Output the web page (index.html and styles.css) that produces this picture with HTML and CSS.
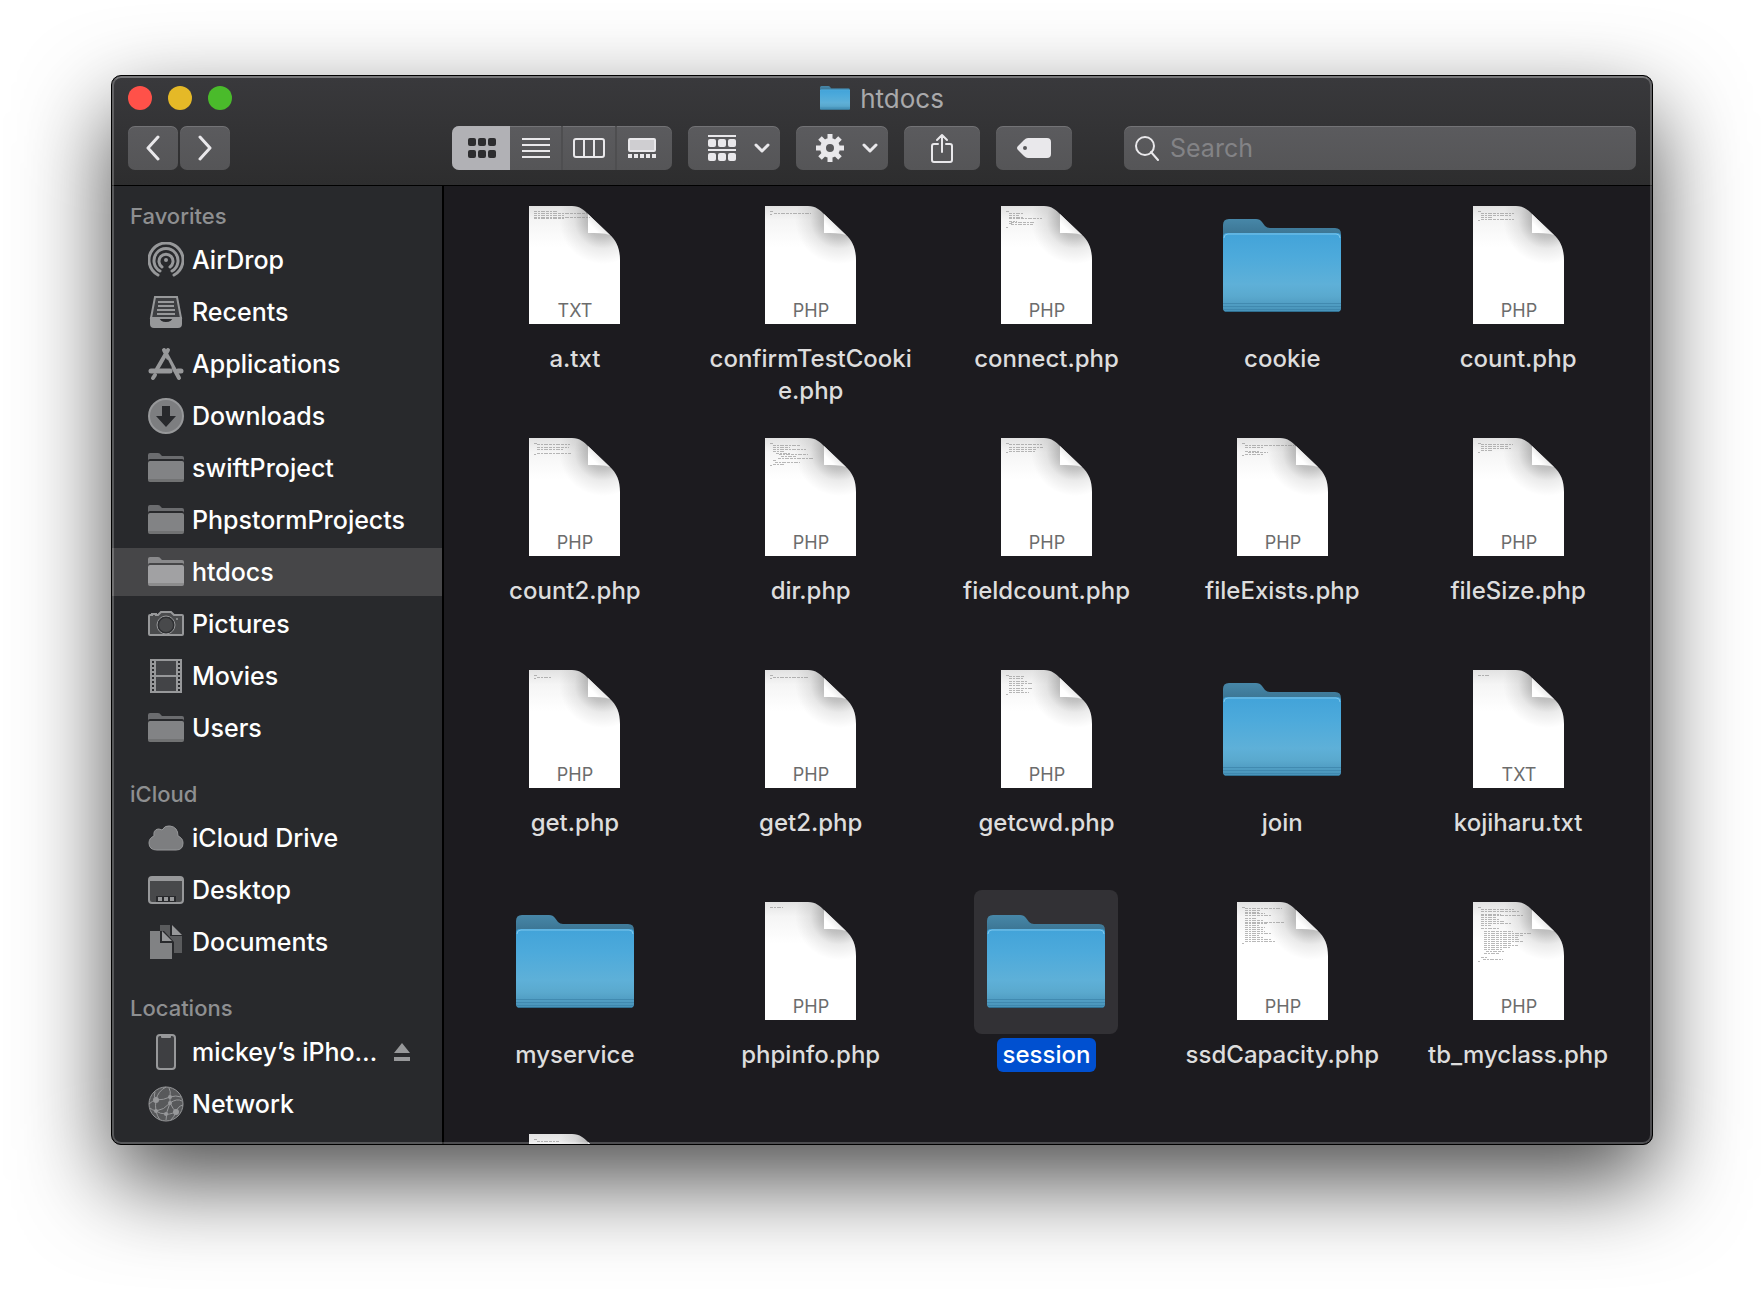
FILE: index.html
```html
<!DOCTYPE html>
<html lang="en">
<head>
    <meta charset="utf-8">
    <title>htdocs</title>
    <link rel="stylesheet" href="styles.css">
</head>
<body>

<!-- shared icons -->
<svg class="defs" width="0" height="0" aria-hidden="true">
    <defs>
        <linearGradient id="folderFront" x1="0" y1="0" x2="0" y2="1">
            <stop offset="0" stop-color="#42a3d9"/>
            <stop offset=".3" stop-color="#4daadb"/>
            <stop offset=".65" stop-color="#5eb0d8"/>
            <stop offset=".8" stop-color="#5aa9ce"/>
            <stop offset="1" stop-color="#4792b8"/>
        </linearGradient>
        <linearGradient id="folderBack" x1="0" y1="0" x2="0" y2="1">
            <stop offset="0" stop-color="#4787a8"/>
            <stop offset="1" stop-color="#356b88"/>
        </linearGradient>
        <linearGradient id="paperTop" x1="0" y1="0" x2="0" y2="1">
            <stop offset="0" stop-color="#e2e2e2"/>
            <stop offset=".12" stop-color="#f5f5f5"/>
            <stop offset=".35" stop-color="#fff"/>
        </linearGradient>
        <radialGradient id="foldShade" gradientUnits="userSpaceOnUse" cx="74" cy="14" r="44">
            <stop offset="0" stop-color="#000" stop-opacity=".36"/>
            <stop offset=".4" stop-color="#000" stop-opacity=".22"/>
            <stop offset=".65" stop-color="#000" stop-opacity=".08"/>
            <stop offset="1" stop-color="#000" stop-opacity="0"/>
        </radialGradient>
        <linearGradient id="fold" gradientUnits="userSpaceOnUse" x1="59" y1="28" x2="70" y2="17">
            <stop offset="0" stop-color="#fff"/>
            <stop offset=".5" stop-color="#fff"/>
            <stop offset="1" stop-color="#e8e8e8"/>
        </linearGradient>

        <symbol id="paper" viewBox="0 0 91 118">
            <path fill="url(#paperTop)" d="M0 0H43C51 0 55 4 60 9L80 28C88 35 91 43 91 54V118H0Z"/>
            <path fill="url(#foldShade)" d="M0 0H43C51 0 55 4 60 9L80 28C88 35 91 43 91 54V118H0Z"/>
            <path fill="url(#fold)" d="M59 8L81 29C75 27 67 27 59 27Z"/>
        </symbol>

        <symbol id="folder" viewBox="0 0 118 94">
            <path fill="url(#folderBack)" d="M0 24V6Q0 0 6 0H33Q37 0 39 3L42 7Q44 9 47 9H112Q118 9 118 15V24Z"/>
            <rect x="0" y="14" width="118" height="79" rx="4" fill="url(#folderFront)"/>
            <path fill="none" stroke="#7cc6ec" d="M1 19Q1 15 5 15H113Q117 15 117 19"/>
            <path fill="none" stroke="#3a82a8" stroke-opacity=".7" d="M0 84.500H118M0 87.500H118M0 90.500H118"/>
            <path fill="none" stroke="#2f6f90" d="M2 92.500H116"/>
        </symbol>

        <symbol id="sideFolder" viewBox="0 0 36 36">
            <path fill="currentColor" opacity=".75" d="M0 11V5Q0 3 2 3H10Q12 3 13 5L14 6H34Q36 6 36 8V11Q36 9 34 9H2Q0 9 0 11Z"/>
            <path fill="currentColor" d="M0 13Q0 11 2 11H34Q36 11 36 13V30Q36 32 34 32H2Q0 32 0 30Z"/>
            <path fill="#000" opacity=".13" d="M0 29H36V30Q36 32 34 32H2Q0 32 0 30Z"/>
        </symbol>

        <symbol id="chevron" viewBox="0 0 16 10">
            <path fill="none" stroke="currentColor" stroke-width="3" stroke-linecap="round" stroke-linejoin="round" d="M2 2L8 8L14 2"/>
        </symbol>
    </defs>
</svg>

<main class="window">
    <header class="toolbar">
        <div class="titlebar">
            <div class="lights">
                <button class="light close" aria-label="Close"></button>
                <button class="light minimize" aria-label="Minimize"></button>
                <button class="light zoom" aria-label="Zoom"></button>
            </div>
            <h1 class="title">
                <svg width="30" height="24"><use href="#folder"/></svg>
                htdocs
            </h1>
        </div>

        <div class="controls">
            <nav class="history">
                <button class="btn" aria-label="Back">
                    <svg width="16" height="26" viewBox="0 0 16 26"><path class="line" stroke-width="3" d="M13 2L3 13L13 24"/></svg>
                </button>
                <button class="btn" aria-label="Forward">
                    <svg width="16" height="26" viewBox="0 0 16 26"><path class="line" stroke-width="3" d="M3 2L13 13L3 24"/></svg>
                </button>
            </nav>

            <div class="views">
                <button class="view on" aria-label="Icons">
                    <svg width="28" height="20" viewBox="0 0 28 20" fill="currentColor">
                        <rect width="8" height="8" rx="2"/><rect x="10" width="8" height="8" rx="2"/><rect x="20" width="8" height="8" rx="2"/>
                        <rect y="12" width="8" height="8" rx="2"/><rect x="10" y="12" width="8" height="8" rx="2"/><rect x="20" y="12" width="8" height="8" rx="2"/>
                    </svg>
                </button>
                <button class="view" aria-label="List">
                    <svg width="28" height="20" viewBox="0 0 28 20"><path stroke="currentColor" stroke-width="2" d="M0 1H28M0 7H28M0 13H28M0 19H28"/></svg>
                </button>
                <button class="view" aria-label="Columns">
                    <svg width="32" height="20" viewBox="0 0 32 20"><path stroke="currentColor" stroke-width="2" fill="none" d="M3 1H29Q31 1 31 3V17Q31 19 29 19H3Q1 19 1 17V3Q1 1 3 1ZM11 1V19M21 1V19"/></svg>
                </button>
                <button class="view" aria-label="Gallery">
                    <svg width="28" height="20" viewBox="0 0 28 20">
                        <rect x="1" y="1" width="26" height="12" rx="1" fill="#cfced1" stroke="currentColor" stroke-width="2"/>
                        <path fill="currentColor" d="M0 16h4v4h-4zM6 16h4v4h-4zM12 16h4v4h-4zM18 16h4v4h-4zM24 16h4v4h-4z"/>
                    </svg>
                </button>
            </div>

            <button class="btn menu" aria-label="Group by">
                <svg width="28" height="26" viewBox="0 0 28 26" fill="currentColor">
                    <rect width="28" height="2"/>
                    <rect y="4" width="8" height="8" rx="2"/><rect x="10" y="4" width="8" height="8" rx="2"/><rect x="20" y="4" width="8" height="8" rx="2"/>
                    <rect y="14" width="28" height="2"/>
                    <rect y="18" width="8" height="8" rx="2"/><rect x="10" y="18" width="8" height="8" rx="2"/><rect x="20" y="18" width="8" height="8" rx="2"/>
                </svg>
                <svg width="16" height="10"><use href="#chevron"/></svg>
            </button>
            <button class="btn menu" aria-label="Action">
                <svg width="28" height="28" viewBox="-14 -14 28 28">
                    <path stroke="currentColor" stroke-width="5" d="M0 -14V-7M0 14V7M-14 0H-7M14 0H7M-10 -10L-5 -5M10 10L5 5M-10 10L-5 5M10 -10L5 -5"/>
                    <circle r="7" fill="none" stroke="currentColor" stroke-width="6"/>
                </svg>
                <svg width="16" height="10"><use href="#chevron"/></svg>
            </button>
            <button class="btn wide" aria-label="Share">
                <svg width="22" height="30" viewBox="0 0 22 30"><path class="line" stroke-width="2" d="M7 11H3Q1 11 1 13V27Q1 29 3 29H19Q21 29 21 27V13Q21 11 19 11H15M11 19V2M6 7L11 2L16 7"/></svg>
            </button>
            <button class="btn wide" aria-label="Edit tags">
                <svg width="34" height="20" viewBox="0 0 34 20"><path fill="currentColor" fill-rule="evenodd" d="M11 0H30Q34 0 34 4V16Q34 20 30 20H11Q9 20 7 18L1 12Q-1 10 1 8L7 2Q9 0 11 0ZM8 8a2 2 0 1 0 0 4a2 2 0 1 0 0 -4Z"/></svg>
            </button>

            <label class="search">
                <svg width="26" height="26" viewBox="0 0 26 26"><circle class="line" stroke-width="2" cx="11" cy="11" r="9"/><path class="line" stroke-width="2" d="M17 17L24 25"/></svg>
                <input type="search" placeholder="Search" aria-label="Search">
            </label>
        </div>
    </header>

    <div class="panes">
        <aside class="sidebar">
            <section>
                <h2>Favorites</h2>
                <a class="item" href="#">
                    <svg width="36" height="36" viewBox="0 0 36 36">
                        <path class="ring" d="M10 33A17 17 0 1 1 26 33M12 29A12 12 0 1 1 24 29M14 25A7 7 0 1 1 22 25"/>
                        <circle cx="18" cy="18" r="2" fill="currentColor"/>
                    </svg>
                    AirDrop
                </a>
                <a class="item" href="#">
                    <svg width="36" height="36" viewBox="0 0 36 36">
                        <path fill="#3e3f42" stroke="currentColor" stroke-width="2" d="M7 3H29L33 24H3Z"/>
                        <path fill="currentColor" d="M2 23H11Q12 28 18 28Q24 28 25 23H34V30Q34 34 30 34H6Q2 34 2 30Z"/>
                        <path stroke="currentColor" stroke-width="2" d="M10 8H26M10 12H26M9 16H27M9 20H27"/>
                    </svg>
                    Recents
                </a>
                <a class="item" href="#">
                    <svg width="36" height="36" viewBox="0 0 36 36">
                        <path fill="none" stroke="currentColor" stroke-width="4" stroke-linecap="round" d="M20 4L9 23M7 29L5 32M16 4L31 32"/>
                        <path stroke="#28292c" stroke-width="2" d="M19 14L23 22"/>
                        <path stroke="currentColor" stroke-width="5" stroke-linecap="round" d="M3 25H22M30 25H33"/>
                    </svg>
                    Applications
                </a>
                <a class="item" href="#">
                    <svg width="36" height="36" viewBox="0 0 36 36">
                        <circle cx="18" cy="18" r="17" fill="#7d7e80" stroke="#97989a" stroke-width="2"/>
                        <path fill="#28292c" d="M14 8H22V18H28L18 29L8 18H14Z"/>
                    </svg>
                    Downloads
                </a>
                <a class="item" href="#"><svg width="36" height="36"><use href="#sideFolder"/></svg>swiftProject</a>
                <a class="item" href="#"><svg width="36" height="36"><use href="#sideFolder"/></svg>PhpstormProjects</a>
                <a class="item current" href="#"><svg width="36" height="36"><use href="#sideFolder"/></svg>htdocs</a>
                <a class="item" href="#">
                    <svg width="36" height="36" viewBox="0 0 36 36">
                        <path fill="#4a4b4d" stroke="currentColor" stroke-width="2" d="M2 9H4V8H8V9H10L13 6H23L26 9H34Q35 9 35 10V28Q35 29 34 29H2Q1 29 1 28V10Q1 9 2 9Z"/>
                        <circle cx="18" cy="19" r="9" fill="#2e2f32" stroke="currentColor" stroke-width="1"/>
                        <circle cx="18" cy="19" r="7" fill="#48494b"/>
                        <circle cx="29" cy="13" r="1" fill="currentColor"/>
                    </svg>
                    Pictures
                </a>
                <a class="item" href="#">
                    <svg width="36" height="36" viewBox="0 0 36 36">
                        <rect x="2" y="1" width="32" height="34" fill="currentColor"/>
                        <path fill="#434447" d="M8 3H28V17H8ZM8 19H28V33H8Z"/>
                        <path stroke="#28292c" stroke-width="2" stroke-dasharray="2 2" d="M5 3V34M31 3V34"/>
                    </svg>
                    Movies
                </a>
                <a class="item" href="#"><svg width="36" height="36"><use href="#sideFolder"/></svg>Users</a>
            </section>

            <section>
                <h2>iCloud</h2>
                <a class="item" href="#">
                    <svg width="36" height="36" viewBox="0 0 36 36">
                        <path fill="#7d7e80" stroke="#97989a" stroke-width="1" d="M9 30Q1 30 1 23Q1 18 6 16Q5 10 10 9Q12 9 14 10Q17 5 22 6Q30 7 30 16Q35 18 35 23Q35 30 28 30Z"/>
                    </svg>
                    iCloud Drive
                </a>
                <a class="item" href="#">
                    <svg width="36" height="36" viewBox="0 0 36 36">
                        <rect x="1" y="5" width="34" height="26" rx="3" fill="#48494b" stroke="currentColor" stroke-width="2"/>
                        <rect x="1" y="5" width="34" height="4" fill="currentColor"/>
                        <path fill="#28292c" d="M8 24H28V30H8Z"/>
                        <path fill="currentColor" d="M10 25h4v4h-4zM16 25h4v4h-4zM22 25h4v4h-4z"/>
                    </svg>
                    Desktop
                </a>
                <a class="item" href="#">
                    <svg width="36" height="36" viewBox="0 0 36 36">
                        <path fill="#5a5b5d" d="M12 1H22V12H34V29H26V18L16 7H12Z"/>
                        <path fill="currentColor" d="M24 1L34 11H24Z"/>
                        <path fill="#818284" d="M2 7H12V19H24V35H2Z"/>
                        <path fill="currentColor" d="M14 7L24 17H14Z"/>
                    </svg>
                    Documents
                </a>
            </section>

            <section>
                <h2>Locations</h2>
                <div class="item">
                    <svg width="36" height="36" viewBox="0 0 36 36">
                        <rect x="9" y="1" width="18" height="34" rx="3" fill="#3e3f42" stroke="currentColor" stroke-width="2"/>
                        <path fill="currentColor" d="M13 1H23V3Q23 4 22 4H14Q13 4 13 3Z"/>
                    </svg>
                    <a href="#">mickey’s iPho…</a>
                    <button class="eject" aria-label="Eject">
                        <svg width="16" height="18" viewBox="0 0 16 18" fill="currentColor"><path d="M8 0L16 10H0ZM0 14H16V18H0Z"/></svg>
                    </button>
                </div>
                <a class="item" href="#">
                    <svg width="36" height="36" viewBox="0 0 36 36">
                        <circle cx="18" cy="18" r="17" fill="#58595b" stroke="currentColor" stroke-width="1"/>
                        <path fill="none" stroke="currentColor" stroke-width="1" d="M8 14Q10 5 18 1M8 14Q16 14 22 11Q28 9 33 11M22 11Q23 5 21 2M22 11V17Q18 26 18 34M22 17Q29 12 34 15M22 17Q25 23 28 26Q30 20 35 19M28 26Q20 29 18 28Q12 28 8 25Q7 20 8 14M8 25Q16 24 22 17M8 14Q4 15 1 18M8 25Q4 24 2 22M8 25Q9 30 12 34M28 26Q26 31 23 34M8 14Q5 10 7 6"/>
                        <g fill="currentColor"><circle cx="8" cy="14" r="3"/><circle cx="22" cy="11" r="2"/><circle cx="22" cy="17" r="2"/><circle cx="28" cy="26" r="3"/><circle cx="18" cy="28" r="2"/><circle cx="8" cy="25" r="2"/></g>
                    </svg>
                    Network
                </a>
            </section>
        </aside>

        <div class="files">
            <a class="file" href="#">
                <span class="thumb"><svg class="doc" viewBox="0 0 91 118"><use href="#paper"/><path class="code" d="M5 5.500h24M5 7.500h54M5 9.500h31M5 11.500h56M5 12.500h30"/><text x="46" y="111">TXT</text></svg></span>
                <span class="name">a.txt</span>
            </a>
            <a class="file" href="#">
                <span class="thumb"><svg class="doc" viewBox="0 0 91 118"><use href="#paper"/><path class="code" d="M5 5.500h4M9 7.500h37M5 8.500h2"/><text x="46" y="111">PHP</text></svg></span>
                <span class="name">confirmTestCookie.php</span>
            </a>
            <a class="file" href="#">
                <span class="thumb"><svg class="doc" viewBox="0 0 91 118"><use href="#paper"/><path class="code" d="M5 5.500h4M8 7.500h14M8 9.500h10M8 11.500h14M8 12.500h33M8 15.500h8M10 16.500h24M8 17.500h4M10 18.500h22M5 21.500h2"/><text x="46" y="111">PHP</text></svg></span>
                <span class="name">connect.php</span>
            </a>
            <a class="file" href="#">
                <span class="thumb"><svg width="118" height="94"><use href="#folder"/></svg></span>
                <span class="name">cookie</span>
            </a>
            <a class="file" href="#">
                <span class="thumb"><svg class="doc" viewBox="0 0 91 118"><use href="#paper"/><path class="code" d="M5 5.500h4M8 7.500h33M8 9.500h31M8 11.500h12M8 13.500h33M5 14.500h2"/><text x="46" y="111">PHP</text></svg></span>
                <span class="name">count.php</span>
            </a>

            <a class="file" href="#">
                <span class="thumb"><svg class="doc" viewBox="0 0 91 118"><use href="#paper"/><path class="code" d="M5 5.500h4M8 6.500h33M8 9.500h32M8 11.500h26M8 15.500h34M5 16.500h2"/><text x="46" y="111">PHP</text></svg></span>
                <span class="name">count2.php</span>
            </a>
            <a class="file" href="#">
                <span class="thumb"><svg class="doc" viewBox="0 0 91 118"><use href="#paper"/><path class="code" d="M5 5.500h4M8 7.500h27M8 9.500h17M8 11.500h33M8 13.500h12M11 15.500h14M14 16.500h29M16 18.500h16M13 20.500h36M8 22.500h4M10 24.500h25M8 26.500h12M5 27.500h2"/><text x="46" y="111">PHP</text></svg></span>
                <span class="name">dir.php</span>
            </a>
            <a class="file" href="#">
                <span class="thumb"><svg class="doc" viewBox="0 0 91 118"><use href="#paper"/><path class="code" d="M5 5.500h4M8 6.500h33M8 9.500h34M8 11.500h28M8 13.500h26M5 14.500h2"/><text x="46" y="111">PHP</text></svg></span>
                <span class="name">fieldcount.php</span>
            </a>
            <a class="file" href="#">
                <span class="thumb"><svg class="doc" viewBox="0 0 91 118"><use href="#paper"/><path class="code" d="M5 5.500h4M8 7.500h49M8 9.500h18M8 13.500h14M11 14.500h20M8 16.500h18M5 17.500h2"/><text x="46" y="111">PHP</text></svg></span>
                <span class="name">fileExists.php</span>
            </a>
            <a class="file" href="#">
                <span class="thumb"><svg class="doc" viewBox="0 0 91 118"><use href="#paper"/><path class="code" d="M5 5.500h4M8 6.500h32M8 8.500h28M8 10.500h31M8 12.500h12M5 14.500h2"/><text x="46" y="111">PHP</text></svg></span>
                <span class="name">fileSize.php</span>
            </a>

            <a class="file" href="#">
                <span class="thumb"><svg class="doc" viewBox="0 0 91 118"><use href="#paper"/><path class="code" d="M5 5.500h4M8 7.500h14M5 8.500h2"/><text x="46" y="111">PHP</text></svg></span>
                <span class="name">get.php</span>
            </a>
            <a class="file" href="#">
                <span class="thumb"><svg class="doc" viewBox="0 0 91 118"><use href="#paper"/><path class="code" d="M5 5.500h4M8 7.500h36M5 8.500h2"/><text x="46" y="111">PHP</text></svg></span>
                <span class="name">get2.php</span>
            </a>
            <a class="file" href="#">
                <span class="thumb"><svg class="doc" viewBox="0 0 91 118"><use href="#paper"/><path class="code" d="M5 5.500h4M8 6.500h16M8 8.500h14M8 11.500h18M8 13.500h24M8 15.500h14M8 18.500h24M8 20.500h14M8 22.500h20M5 24.500h2"/><text x="46" y="111">PHP</text></svg></span>
                <span class="name">getcwd.php</span>
            </a>
            <a class="file" href="#">
                <span class="thumb"><svg width="118" height="94"><use href="#folder"/></svg></span>
                <span class="name">join</span>
            </a>
            <a class="file" href="#">
                <span class="thumb"><svg class="doc" viewBox="0 0 91 118"><use href="#paper"/><path class="code" d="M5 5.500h11"/><text x="46" y="111">TXT</text></svg></span>
                <span class="name">kojiharu.txt</span>
            </a>

            <a class="file" href="#">
                <span class="thumb"><svg width="118" height="94"><use href="#folder"/></svg></span>
                <span class="name">myservice</span>
            </a>
            <a class="file" href="#">
                <span class="thumb"><svg class="doc" viewBox="0 0 91 118"><use href="#paper"/><path class="code" d="M5 5.500h13"/><text x="46" y="111">PHP</text></svg></span>
                <span class="name">phpinfo.php</span>
            </a>
            <a class="file selected" href="#">
                <span class="thumb"><svg width="118" height="94"><use href="#folder"/></svg></span>
                <span class="name">session</span>
            </a>
            <a class="file" href="#">
                <span class="thumb"><svg class="doc" viewBox="0 0 91 118"><use href="#paper"/><path class="code" d="M5 5.500h4M8 6.500h37M8 8.500h16M8 10.500h14M8 11.500h20M8 13.500h26M8 16.500h12M8 18.500h18M8 20.500h39M8 21.500h22M8 23.500h14M8 25.500h20M8 27.500h18M8 29.500h20M8 31.500h26M8 33.500h14M8 35.500h18M8 37.500h26M8 39.500h31M5 41.500h2"/><text x="46" y="111">PHP</text></svg></span>
                <span class="name">ssdCapacity.php</span>
            </a>
            <a class="file" href="#">
                <span class="thumb"><svg class="doc" viewBox="0 0 91 118"><use href="#paper"/><path class="code" d="M5 5.500h4M8 7.500h33M8 9.500h38M8 12.500h20M8 13.500h42M8 15.500h16M8 17.500h18M8 19.500h24M8 21.500h30M8 23.500h10M8 26.500h18M11 29.500h29M11 31.500h48M11 33.500h39M11 35.500h34M11 37.500h36M11 39.500h40M11 41.500h28M11 43.500h34M11 45.500h26M11 47.500h18M13 49.500h18M11 51.500h16M8 55.500h6M10 57.500h20M5 59.500h2"/><text x="46" y="111">PHP</text></svg></span>
                <span class="name">tb_myclass.php</span>
            </a>

            <a class="file" href="#" aria-label="More files">
                <span class="thumb"><svg class="doc" viewBox="0 0 91 118"><use href="#paper"/><path class="code" d="M5 5.500h4M8 7.500h22"/></svg></span>
            </a>
        </div>
    </div>
</main>

</body>
</html>
```
FILE: styles.css
```css
* {
    box-sizing: border-box;
}

body {
    display: flex;
    height: 100vh;
    margin: 0;
    padding: 75px 111px 147px;
    background: #ffffff;
    color: #ffffff;
    font-family: Inter, "Liberation Sans", sans-serif;
    font-size: 25px;
    overflow: hidden;
}

button {
    margin: 0;
    padding: 0;
    border: 0;
    background: none;
    color: inherit;
    font: inherit;
}

a {
    color: inherit;
    text-decoration: none;
}

svg {
    display: block;
    flex: none;
}

.defs {
    position: absolute;
}

.window {
    position: relative;
    display: flex;
    flex-direction: column;
    flex: 1;
    min-width: 0;
    border: 1px solid #000000;
    border-radius: 10px;
    background: #1c1b1f;
    box-shadow: 0 36px 90px rgba(0, 0, 0, 0.7);
    overflow: hidden;
}

/* light rim drawn over both panes */
.window::after {
    content: "";
    position: absolute;
    inset: 0;
    border: 2px solid rgba(255, 255, 255, 0.22);
    border-top-color: rgba(255, 255, 255, 0.32);
    border-radius: 9px;
    pointer-events: none;
}

/* toolbar */

.toolbar {
    padding: 0 16px 15px;
    border-bottom: 1px solid #000000;
    background: linear-gradient(#39393c, #2d2d2e);
}

.titlebar {
    display: grid;
    grid-template-columns: 1fr auto 1fr;
    align-items: center;
    height: 44px;
    margin-bottom: 6px;
}

.lights {
    display: flex;
    gap: 16px;
}

.light {
    width: 24px;
    height: 24px;
    border-radius: 50%;
}

.close {
    background: #ff5149;
}

.minimize {
    background: #e5b927;
}

.zoom {
    background: #4abb2b;
}

.title {
    display: flex;
    align-items: center;
    gap: 10px;
    margin: 0;
    color: #a9a9ab;
    font-size: 26px;
    font-weight: 400;
}

.controls {
    display: flex;
    gap: 16px;
    height: 44px;
    color: #e9e8eb;
}

.line {
    fill: none;
    stroke: currentColor;
    stroke-linecap: round;
    stroke-linejoin: round;
}

.btn,
.views,
.search {
    border-radius: 7px;
    background: linear-gradient(#5b5b5e, #555557);
    box-shadow: inset 0 1px 0 rgba(255, 255, 255, 0.15);
}

.btn {
    display: flex;
    align-items: center;
    justify-content: center;
    width: 50px;
}

.history {
    display: flex;
    gap: 2px;
    margin-right: 206px;
}

.views {
    display: flex;
    width: 220px;
    overflow: hidden;
}

.view {
    display: flex;
    flex: 1;
    align-items: center;
    justify-content: center;
    border-right: 2px solid #4e4e50;
}

.view.on {
    flex: none;
    width: 58px;
    padding-left: 2px;
    border-right: 0;
    background: #b1b1b5;
    color: #2d2d2f;
}

.view:last-child {
    padding-right: 4px;
    border-right: 0;
}

.btn.menu {
    gap: 18px;
    width: 92px;
    padding-left: 10px;
}

.btn.wide {
    width: 76px;
}

.search {
    display: flex;
    flex: 1;
    align-items: center;
    gap: 10px;
    margin-left: 36px;
    padding: 0 10px;
}

.search input {
    flex: 1;
    min-width: 0;
    padding: 0;
    border: 0;
    outline: 0;
    background: none;
    color: #ffffff;
    font: inherit;
}

.search input::placeholder {
    color: #838386;
}

/* panes */

.panes {
    display: flex;
    flex: 1;
    min-height: 0;
}

.sidebar {
    flex: none;
    width: 332px;
    padding-top: 12px;
    border-right: 2px solid #000000;
    background: #28292c;
    overflow: hidden;
}

.sidebar section {
    margin-bottom: 24px;
}

.sidebar h2 {
    margin: 0;
    padding-left: 18px;
    color: #8e8f91;
    font-size: 22px;
    font-weight: 500;
    line-height: 36px;
}

.item {
    display: flex;
    align-items: center;
    gap: 8px;
    height: 48px;
    margin: 2px 0 4px;
    padding: 0 32px 0 36px;
    font-weight: 500;
    white-space: nowrap;
}

.item svg {
    color: #97989a;
}

.item use {
    color: #828385;
}

.current {
    background: #464648;
}

.current use {
    color: #a1a1a3;
}

.ring {
    fill: none;
    stroke: currentColor;
    stroke-width: 3;
    stroke-linecap: round;
}

.eject {
    margin-left: auto;
}

.files {
    display: grid;
    flex: 1;
    grid-template-columns: repeat(5, 1fr);
    grid-auto-rows: 232px;
    padding: 8px 16px 0 13px;
    overflow: hidden;
}

.file {
    display: flex;
    flex-direction: column;
    align-items: center;
    min-width: 0;
    color: #dddddd;
    font-size: 24px;
    font-weight: 500;
}

.thumb {
    display: flex;
    align-items: center;
    justify-content: center;
    flex: none;
    width: 144px;
    height: 144px;
    border-radius: 8px;
}

.doc {
    width: 91px;
    height: 118px;
    margin-bottom: 2px;
}

.doc text {
    fill: #6c6c6c;
    font-size: 18px;
    font-weight: 400;
    text-anchor: middle;
}

.code {
    fill: none;
    stroke: #8a8a8a;
    stroke-width: 1;
    stroke-dasharray: 3 1 2 1 4 1;
    opacity: 0.6;
}

.name {
    max-width: 220px;
    margin-top: 4px;
    padding: 1px 6px;
    border-radius: 6px;
    line-height: 32px;
    text-align: center;
    word-break: break-all;
}

.selected .thumb {
    background: #323135;
}

.selected .name {
    background: #0050d0;
    color: #ffffff;
}
```
